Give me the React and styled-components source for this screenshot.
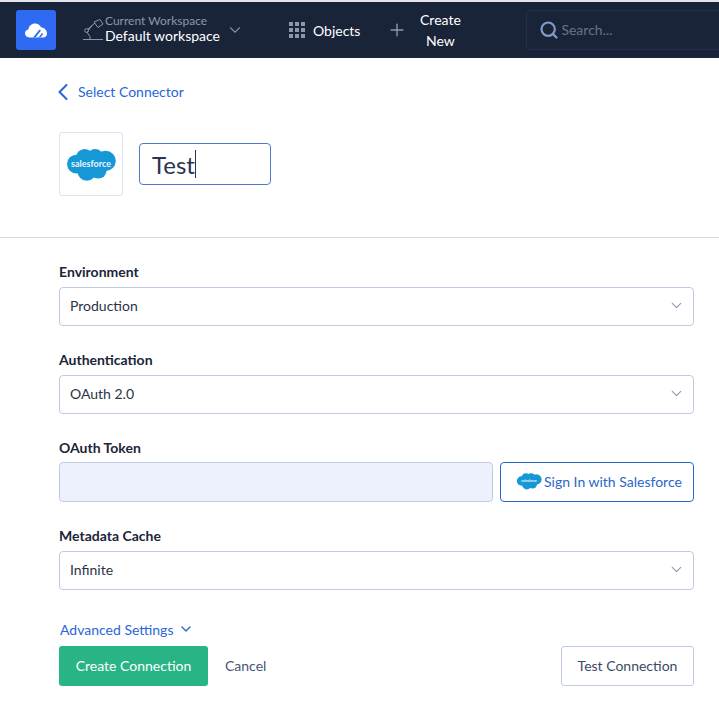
import React from 'react';
import styled, { createGlobalStyle } from 'styled-components';
import { ChevronDown, ChevronLeft, Plus, Search } from 'lucide-react';

const GlobalStyle = createGlobalStyle`
  html, body {
    margin: 0;
    padding: 0;
    background: #fff;
    font-family: Lato, "Open Sans", sans-serif;
    color: #1b2438;
  }
  * { box-sizing: border-box; }
`;

const SalesforceCloud = ({ width, height, fontSize = 8.6 }) => (
  <svg width={width} height={height} viewBox="0 0 48 34">
    <g fill="#1798d6">
      <circle cx="18" cy="11" r="8.5" />
      <circle cx="28" cy="10" r="7.5" />
      <circle cx="38" cy="14" r="9.800" />
      <circle cx="10" cy="17" r="9" />
      <circle cx="20" cy="24" r="9" />
      <circle cx="31" cy="23" r="8" />
    </g>
    <text x="24" y="19.5" textAnchor="middle" fontSize={fontSize} fontWeight="700" fill="#eaf6fc" fontFamily="Lato, sans-serif">
      salesforce
    </text>
  </svg>
);

const LampIcon = () => (
  <svg width="21" height="24" viewBox="0 0 21 24" fill="none" stroke="#8b97ad" strokeWidth="1">
    <path d="M0 21.500h20" />
    <path d="M7 21.500v-3l-3-4 5-7" />
    <circle cx="3.6" cy="12.500" r="1.900" />
    <path d="M5 11l7-6" />
    <path d="M11 4l6-2.500 3 4.500-5 3.500z" />
  </svg>
);

const GridIcon = () => (
  <GridDots>
    {Array.from({ length: 9 }).map((_, i) => <i key={i} />)}
  </GridDots>
);

const CloudLogo = () => (
  <svg width="24" height="18" viewBox="0 0 24 18">
    <path fill="#fff" d="M5.5 16.5C2.5 16.5 1 14.5 1 12.300c0-2 1.400-3.600 3.300-3.900C5 5 7.500 2.500 11 2.500c2.700 0 5 1.500 6 3.800 3.300.4 6 3 6 6.200 0 2.400-1.600 4-4 4z" />
    <path fill="#2f6bf2" d="M9 16.500l6.500-8 1.500 1-5.500 7zM14.500 16.500l3.500-4.500 1.200.9-2.800 3.600z" />
  </svg>
);

const Field = ({ label, value }) => (
  <FieldBlock>
    <Label>{label}</Label>
    <SelectBox>
      {value}
      <ChevronDown size={17} color="#8e9bb5" strokeWidth={1.7} />
    </SelectBox>
  </FieldBlock>
);

export default function App() {
  return (
    <>
      <GlobalStyle />
      <Header>
        <LogoTile><CloudLogo /></LogoTile>
        <Workspace>
          <LampIcon />
          <WorkspaceText>
            <WorkspaceCaption>Current Workspace</WorkspaceCaption>
            <WorkspaceName>Default workspace</WorkspaceName>
          </WorkspaceText>
          <ChevronDown size={18} color="#7f8ca6" strokeWidth={1.5} />
        </Workspace>
        <HeaderDivider />
        <NavItem>
          <GridIcon />
          Objects
        </NavItem>
        <CreateItem>
          <Plus size={20} color="#8b97ad" strokeWidth={1.7} />
          <CreateLabel>Create<br />New</CreateLabel>
        </CreateItem>
        <SearchBox>
          <Search size={20} color="#7f9bc9" strokeWidth={2.6} />
          Search...
        </SearchBox>
      </Header>

      <TitleSection>
        <BackLink>
          <ChevronLeft size={28} color="#2a66d9" strokeWidth={1.8} />
          <BackText>Select Connector</BackText>
        </BackLink>
        <TitleRow>
          <ConnectorTile>
            <SalesforceCloud width={50} height={36} />
          </ConnectorTile>
          <NameInput>Test<Caret /></NameInput>
        </TitleRow>
      </TitleSection>

      <Form>
        <Field label="Environment" value="Production" />
        <Field label="Authentication" value="OAuth 2.0" />
        <FieldBlock>
          <TokenLabel>OAuth Token</TokenLabel>
          <TokenRow>
            <TokenInput />
            <SignInButton>
              <SalesforceCloud width={26} height={18} fontSize={6.5} />
              Sign In with Salesforce
            </SignInButton>
          </TokenRow>
        </FieldBlock>
        <Field label="Metadata Cache" value="Infinite" />
        <AdvancedLink>
          Advanced Settings
          <ChevronDown size={16} color="#2a66d9" strokeWidth={2} />
        </AdvancedLink>
        <Actions>
          <PrimaryButton>Create Connection</PrimaryButton>
          <CancelButton>Cancel</CancelButton>
          <TestButton>Test Connection</TestButton>
        </Actions>
      </Form>
    </>
  );
}

const Header = styled.header`
  height: 58px;
  border-top: 2px solid #e3e5ea;
  background: #1a2439;
  display: flex;
  align-items: center;
  padding-left: 16px;
  overflow: hidden;
`;

const LogoTile = styled.div`
  width: 40px;
  height: 40px;
  flex: none;
  border-radius: 3px;
  background: #2f6bf2;
  display: flex;
  align-items: center;
  justify-content: center;
`;

const Workspace = styled.div`
  display: flex;
  align-items: center;
  margin-left: 27px;
  svg:last-child { margin-left: 6px; }
`;

const WorkspaceText = styled.div`
  display: flex;
  flex-direction: column;
  margin: 0 0 3px 1px;
`;

const WorkspaceCaption = styled.span`
  font-size: 12px;
  line-height: 15px;
  color: #8b97ad;
  white-space: nowrap;
`;

const WorkspaceName = styled.span`
  font-size: 14px;
  line-height: 16px;
  color: #fff;
  white-space: nowrap;
`;

const HeaderDivider = styled.div`
  width: 1px;
  height: 32px;
  background: #34415a;
  margin-left: 24px;
`;

const NavItem = styled.div`
  display: flex;
  align-items: center;
  gap: 8px;
  margin-left: 21px;
  font-size: 14px;
  color: #fff;
`;

const GridDots = styled.div`
  display: grid;
  grid-template-columns: repeat(3, 4px);
  grid-auto-rows: 4px;
  gap: 2px;
  i { background: #8b97ad; }
`;

const CreateItem = styled.div`
  display: flex;
  align-items: center;
  margin-left: 27px;
`;

const CreateLabel = styled.div`
  width: 60px;
  margin: 0 0 1px 3px;
  text-align: center;
  font-size: 14px;
  line-height: 21px;
  color: #fff;
`;

const SearchBox = styled.div`
  width: 300px;
  height: 40px;
  flex: none;
  margin-left: 56px;
  padding: 0 0 1px 12px;
  display: flex;
  align-items: center;
  gap: 2px;
  border: 1px solid #232f48;
  border-radius: 3px;
  font-size: 14px;
  color: #64738f;
`;

const TitleSection = styled.section`
  height: 180px;
  border-bottom: 1px solid #d5d9e0;
  padding: 24px 0 0 49px;
`;

const BackLink = styled.div`
  display: flex;
  align-items: center;
  gap: 1px;
  height: 20px;
  font-size: 14px;
  color: #2a66d9;
`;

const BackText = styled.span`
  margin-bottom: 2px;
`;

const TitleRow = styled.div`
  display: flex;
  align-items: center;
  gap: 16px;
  margin: 30px 0 0 10px;
`;

const ConnectorTile = styled.div`
  width: 64px;
  height: 64px;
  border: 1px solid #dbe3f3;
  border-radius: 3px;
  display: flex;
  align-items: center;
  justify-content: center;
`;

const NameInput = styled.div`
  width: 132px;
  height: 42px;
  border: 1.5px solid #4e77cc;
  border-radius: 4px;
  padding-left: 12px;
  display: flex;
  align-items: center;
  font-size: 24px;
  color: #2a3350;
`;

const Caret = styled.span`
  width: 1px;
  height: 28px;
  background: #2a3350;
`;

const Form = styled.main`
  padding: 27px 25px 0 59px;
  display: flex;
  flex-direction: column;
`;

const FieldBlock = styled.div`
  margin-bottom: 27px;
`;

const Label = styled.div`
  height: 14px;
  line-height: 14px;
  margin-bottom: 8px;
  font-size: 14px;
  font-weight: 700;
  color: #1b2438;
`;

const TokenLabel = styled(Label)`
  margin-bottom: 7px;
`;

const SelectBox = styled.div`
  height: 39px;
  border: 1px solid #bfcbe4;
  border-radius: 4px;
  padding: 0 8px 2px 10px;
  display: flex;
  align-items: center;
  justify-content: space-between;
  font-size: 14px;
  color: #2b3345;
`;

const TokenRow = styled.div`
  display: flex;
  gap: 7px;
`;

const TokenInput = styled.div`
  flex: 1;
  height: 40px;
  background: #ecf1fd;
  border: 1px solid #bfcbe4;
  border-radius: 4px;
`;

const SignInButton = styled.button`
  width: 194px;
  height: 40px;
  flex: none;
  padding: 0 0 2px 15px;
  background: #fff;
  border: 1.5px solid #2a66c9;
  border-radius: 4px;
  display: flex;
  align-items: center;
  gap: 2px;
  font-family: inherit;
  font-size: 14px;
  color: #2a66c9;
`;

const AdvancedLink = styled.div`
  display: flex;
  align-items: center;
  gap: 5px;
  height: 18px;
  margin: 3px 0 0 1px;
  font-size: 14px;
  color: #2a66d9;
`;

const Actions = styled.div`
  display: flex;
  align-items: center;
  margin-top: 8px;
`;

const PrimaryButton = styled.button`
  width: 149px;
  height: 40px;
  padding-bottom: 2px;
  background: #28b484;
  border: none;
  border-radius: 3px;
  font-family: inherit;
  font-size: 14px;
  color: #fff;
`;

const CancelButton = styled.button`
  margin: 0 0 2px 17px;
  padding: 0;
  background: none;
  border: none;
  font-family: inherit;
  font-size: 14px;
  color: #44547a;
`;

const TestButton = styled.button`
  width: 133px;
  height: 40px;
  margin-left: auto;
  padding-bottom: 2px;
  background: #fff;
  border: 1px solid #bfcbe4;
  border-radius: 3px;
  font-family: inherit;
  font-size: 14px;
  color: #3c4a68;
`;
